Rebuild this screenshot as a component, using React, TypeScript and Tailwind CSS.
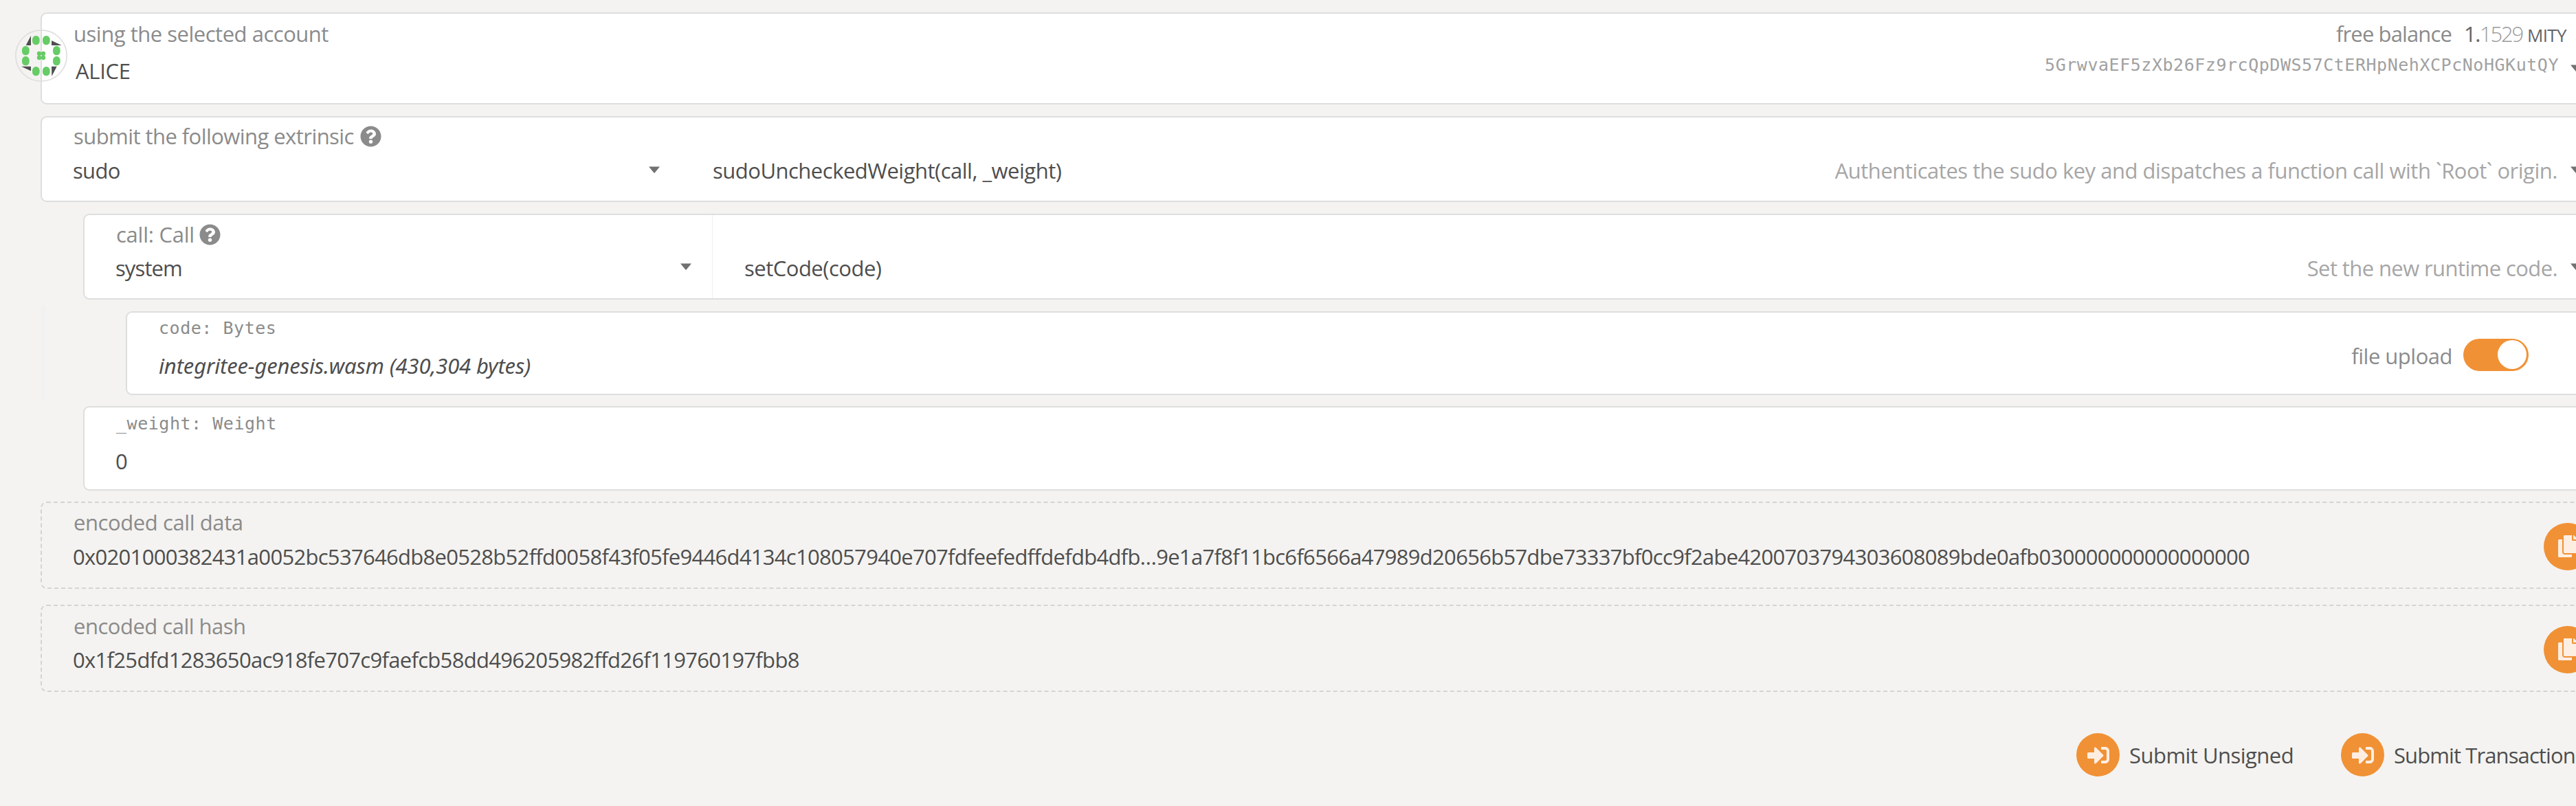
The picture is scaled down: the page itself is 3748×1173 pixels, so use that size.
import type { ReactNode } from "react";
import { FaCopy, FaQuestionCircle, FaSignInAlt } from "react-icons/fa";

const CALL_DATA =
  "0x0201000382431a0052bc537646db8e0528b52ffd0058f43f05fe9446d4134c108057940e707fdfeefedffdefdb4dfb…9e1a7f8f11bc6f6566a47989d20656b57dbe73337bf0cc9f2abe4200703794303608089bde0afb030000000000000000";
const CALL_HASH = "0x1f25dfd1283650ac918fe707c9faefcb58dd496205982ffd26f119760197fbb8";

function Caret({ className = "" }: { className?: string }) {
  return (
    <svg width="16" height="10" viewBox="0 0 16 10" className={`shrink-0 ${className}`}>
      <path d="M0 0.5H16L8.6 9.4Q8 10 7.4 9.4Z" fill="#717171" />
    </svg>
  );
}

function Panel({ className = "", children }: { className?: string; children: ReactNode }) {
  return (
    <section className={`flex rounded-[9px] border-2 border-[#dedede] bg-white ${className}`}>{children}</section>
  );
}

function Mono({ className = "", children }: { className?: string; children: ReactNode }) {
  return (
    <div
      className={`font-['DejaVu_Sans_Mono',monospace] text-[25px] leading-[28px] tracking-[0.53px] whitespace-pre ${className}`}
    >
      {children}
    </div>
  );
}

function Identicon() {
  const dots = [
    [157, 115], [202, 115], [112, 160], [247, 160],
    [112, 205], [247, 205], [157, 250], [202, 250],
  ];
  const center = [[171, 173], [189, 173], [171, 191], [189, 191]];
  return (
    <svg className="absolute -left-[39px] top-[23px]" width="76" height="76" viewBox="66 68 228 228">
      <circle cx="180" cy="182" r="111.5" fill="none" stroke="#dedede" strokeWidth="5" />
      <g fill="#4e4e4e">
        <path d="M113 137L135 95V137Z" />
        <path d="M225 116L269 137H225Z" />
        <path d="M93 229H135V249Z" />
        <path d="M225 229H248L226 272Z" />
      </g>
      <g fill="#66cc66">
        {dots.map(([x, y]) => (
          <rect key={`${x}-${y}`} x={x - 16} y={y - 20} width="32" height="40" rx="15" ry="17" />
        ))}
        {center.map(([x, y]) => (
          <circle key={`${x}-${y}`} cx={x} cy={y} r="9.5" />
        ))}
      </g>
    </svg>
  );
}

function CopyButton() {
  return (
    <button className="mt-[3px] mr-[18px] ml-auto flex size-[69px] shrink-0 items-center justify-center self-center rounded-full bg-[#f19135] text-[#feeee2]">
      <FaCopy size={32} />
    </button>
  );
}

function SubmitButton({ children }: { children: ReactNode }) {
  return (
    <button className="flex w-[385px] shrink-0 items-center gap-[13px] text-[#4e4e4e]">
      <span className="flex size-[63px] shrink-0 items-center justify-center rounded-full bg-[#f19135] text-[#feeee2]">
        <FaSignInAlt size={32} />
      </span>
      {children}
    </button>
  );
}

export default function App() {
  return (
    <div className="h-[1173px] w-[3748px] overflow-hidden bg-[#f4f3f1] font-['Open_Sans',sans-serif] text-[31px] leading-[44px] whitespace-nowrap text-[#4e4e4e]">
      <main className="flex w-[3790px] flex-col pt-[18px]">
        <Panel className="relative ml-[59px] h-[134px] justify-between pl-[45px]">
          <Identicon />
          <div className="pt-[7px]">
            <div className="pl-px tracking-[-0.48px] text-[#8b8b8b]">using the selected account</div>
            <div className="mt-[10px] pl-[4px] tracking-[-0.3px]">ALICE</div>
          </div>
          <div className="flex flex-col items-end pt-[7px]">
            <div className="flex items-baseline pr-[54px]">
              <span className="mr-[18px] tracking-[-0.87px] text-[#8b8b8b]">free balance</span>
              <span className="tracking-[-1.5px] text-[#646464]">1.</span>
              <span className="font-light tracking-[-2.2px] text-[#9a9a9a]">1529</span>
              <span className="ml-[7px] text-[26px] tracking-[-0.6px] text-[#646464]">MITY</span>
            </div>
            <div className="mt-[8px] flex items-center gap-[17px] pr-[32px]">
              <Mono className="text-[#a1a1a1]">5GrwvaEF5zXb26Fz9rcQpDWS57CtERHpNehXCPcNoHGKutQY</Mono>
              <Caret className="mt-[8px]" />
            </div>
          </div>
        </Panel>

        <Panel className="mt-[17px] ml-[59px] h-[125px] pt-[5px]">
          <div className="w-[930px] pr-[31px] pl-[45px]">
            <div className="flex items-center gap-[9px] pl-px text-[#8b8b8b]">
              <span className="tracking-[-0.56px]">submit the following extrinsic</span>
              <FaQuestionCircle size={31} />
            </div>
            <div className="mt-[6px] flex items-center justify-between">
              <span className="tracking-[-0.7px]">sudo</span>
              <Caret className="mb-[3px]" />
            </div>
          </div>
          <div className="mt-[50px] flex h-[44px] flex-1 items-center pr-[32px] pl-[46px]">
            <span className="tracking-[-0.5px]">sudoUncheckedWeight(call, _weight)</span>
            <span className="mr-[19px] ml-auto tracking-[-0.48px] text-[#a6a6a6]">
              Authenticates the sudo key and dispatches a function call with `Root` origin.
            </span>
            <Caret className="mb-[3px]" />
          </div>
        </Panel>

        <Panel className="mt-[17px] ml-[121px] h-[125px]">
          <div className="w-[914px] border-r border-[#f0f0f0] pt-[6px] pr-[30px] pl-[45px]">
            <div className="flex items-center gap-[7px] pl-px text-[#8b8b8b]">
              <span className="tracking-[-0.25px]">call: Call</span>
              <FaQuestionCircle size={31} />
            </div>
            <div className="mt-[5px] flex items-center justify-between">
              <span className="tracking-[-0.9px]">system</span>
              <Caret className="mb-[4px]" />
            </div>
          </div>
          <div className="mt-[55px] flex h-[44px] flex-1 items-center pr-[32px] pl-[46px]">
            <span className="tracking-[-0.5px]">setCode(code)</span>
            <span className="mr-[19px] ml-auto tracking-[-0.6px] text-[#a6a6a6]">Set the new runtime code.</span>
            <Caret className="mb-[4px]" />
          </div>
        </Panel>

        <div className="mt-[8px] ml-[60px] border-l-[6px] border-[#f1f1f2] pt-[9px] pb-[8px]">
          <Panel className="ml-[117px] h-[122px] justify-between pr-[109px] pl-[46px]">
            <div className="pt-[9px]">
              <Mono className="text-[#8b8b8b]">code: Bytes</Mono>
              <div className="mt-[18px] font-['Noto_Sans',sans-serif] tracking-[-0.14px] italic">
                integritee-genesis.wasm (430,304 bytes)
              </div>
            </div>
            <div className="mt-[4px] flex items-center gap-[16px] self-center">
              <span className="mt-[3px] tracking-[-0.5px] text-[#8b8b8b]">file upload</span>
              <span className="flex h-[47px] w-[95px] items-center justify-end rounded-full bg-[#f19135] pr-[3px]">
                <span className="size-[42px] rounded-full bg-white" />
              </span>
            </div>
          </Panel>
        </div>

        <Panel className="mt-[8px] ml-[121px] h-[123px] pl-[45px]">
          <div className="pt-[10px]">
            <Mono className="pl-px text-[#8b8b8b]">_weight: Weight</Mono>
            <div className="mt-[18px]">0</div>
          </div>
        </Panel>

        <section className="mt-[16px] ml-[59px] flex h-[127px] rounded-[9px] border-2 border-dashed border-[#d5d4d3] pl-[45px]">
          <div className="pt-[6px]">
            <div className="pl-px tracking-[-0.41px] text-[#8b8b8b]">encoded call data</div>
            <div className="mt-[6px] tracking-[-0.703px]">{CALL_DATA}</div>
          </div>
          <CopyButton />
        </section>

        <section className="mt-[23px] ml-[59px] flex h-[127px] rounded-[9px] border-2 border-dashed border-[#d5d4d3] pl-[45px]">
          <div className="pt-[7px]">
            <div className="pl-px tracking-[-0.5px] text-[#8b8b8b]">encoded call hash</div>
            <div className="mt-[5px] tracking-[-0.692px]">{CALL_HASH}</div>
          </div>
          <CopyButton />
        </section>

        <div className="mt-[60px] flex pl-[3021px]">
          <SubmitButton>
            <span className="pl-px tracking-[-0.53px]">Submit Unsigned</span>
          </SubmitButton>
          <SubmitButton>
            <span className="pl-px tracking-[-0.9px]">Submit Transaction</span>
          </SubmitButton>
        </div>
      </main>
    </div>
  );
}
